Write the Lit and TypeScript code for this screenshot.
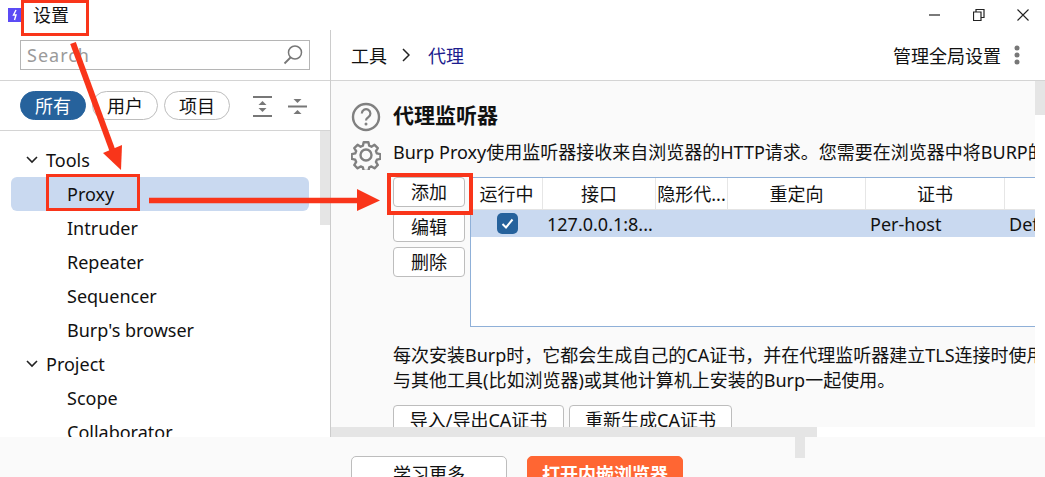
import {html, css, LitElement} from 'lit';
import {customElement} from 'lit/decorators.js';

const chevron = html`<svg class="chev" width="12" height="8" viewBox="0 0 12 8"><path d="M1 1l5 5 5-5" fill="none" stroke="#222" stroke-width="1.6"/></svg>`;

@customElement('app-root')
export class AppRoot extends LitElement {
  static styles = css`
    :host {
      display: block;
      position: relative;
      width: 1045px;
      height: 477px;
      overflow: hidden;
      background: #fff;
      color: #111;
      font-family: "Noto Sans", "Noto Sans CJK SC", sans-serif;
      font-size: 18px;
    }
    .titlebar {
      height: 30px;
      display: flex;
      align-items: center;
      justify-content: space-between;
      padding: 0 16px 0 8px;
    }
    .win {
      display: flex;
      gap: 32px;
      align-items: center;
    }
    .body {
      display: flex;
      height: 407px;
    }
    .side {
      width: 330px;
      border-right: 1px solid #ccc;
      flex: none;
      display: flex;
      flex-direction: column;
    }
    .search-row {
      padding: 10px 20px 0;
      box-sizing: border-box;
      border-bottom: 1px solid #d4d4d4;
      height: 51px;
    }
    .search {
      width: 290px;
      height: 30px;
      box-sizing: border-box;
      border: 1px solid #b5b5b5;
      display: flex;
      align-items: center;
      justify-content: space-between;
      padding: 0 6px;
      color: #9a9a9a;
      font-size: 18px;
      letter-spacing: 1px;
    }
    .filters {
      height: 50px;
      box-sizing: border-box;
      padding: 10px 0 0 20px;
      border-bottom: 1px solid #d4d4d4;
      display: flex;
      align-items: flex-start;
      gap: 6px;
    }
    .pill {
      width: 66px;
      height: 29px;
      box-sizing: border-box;
      border: 1px solid #bdbdbd;
      border-radius: 15px;
      display: flex;
      align-items: center;
      justify-content: center;
      line-height: 1;
    }
    .pill.on {
      background: #26629c;
      border-color: #26629c;
      color: #fff;
    }
    .fold {
      display: flex;
      gap: 16px;
      margin-left: 17px;
      margin-top: 5px;
    }
    .tree-wrap {
      flex: 1;
      display: flex;
      overflow: hidden;
    }
    .tree {
      flex: 1;
      padding: 12px 11px 0 11px;
    }
    .row {
      height: 34px;
      display: flex;
      align-items: center;
      padding-left: 56px;
      border-radius: 6px;
    }
    .row.group {
      padding-left: 15px;
    }
    .row.sel {
      background: #c9d9f0;
    }
    .chev {
      margin-right: 8px;
    }
    .thumb-v {
      width: 10px;
      height: 94px;
      background: #e5e5e5;
      flex: none;
    }
    .main {
      flex: 1;
      display: flex;
      flex-direction: column;
      min-width: 0;
    }
    .crumbs {
      box-sizing: border-box;
      border-bottom: 1px solid #d4d4d4;
      height: 51px;
      display: flex;
      align-items: center;
      padding: 0 25px 0 20px;
    }
    .crumbs .cur {
      color: #1c1c8e;
    }
    .crumbs .sep {
      margin: 0 18px 0 15px;
    }
    .crumbs .global {
      margin-left: auto;
    }
    .kebab {
      margin-left: 13px;
    }
    .scroll-area {
      flex: 1;
      display: flex;
      min-height: 0;
    }
    .content {
      width: 704px;
      flex: none;
      box-sizing: border-box;
      overflow: hidden;
      background: #fafafa;
      padding: 21px 0 0 20px;
      display: grid;
      grid-template-columns: 30px 1fr;
      column-gap: 12px;
      align-content: start;
    }
    .icons {
      display: flex;
      flex-direction: column;
      gap: 8px;
    }
    .panel {
      min-width: 0;
    }
    .nowrap {
      white-space: nowrap;
    }
    h2 {
      margin: 0 0 11px;
      font-size: 21px;
      line-height: 26px;
      font-weight: 700;
    }
    .desc {
      margin: 0;
      line-height: 26px;
    }
    .listeners {
      display: flex;
      gap: 5px;
      margin-top: 12px;
    }
    .btns {
      display: flex;
      flex-direction: column;
      gap: 5px;
      flex: none;
    }
    .btn {
      box-sizing: border-box;
      width: 72px;
      height: 30px;
      background: #fff;
      border: 1px solid #bdbdbd;
      border-radius: 4px;
      display: flex;
      align-items: center;
      justify-content: center;
      line-height: 1;
    }
    .table {
      flex: 1;
      min-width: 0;
      height: 150px;
      box-sizing: border-box;
      background: #fff;
      border: 1px solid #8fb0d8;
      border-right: none;
      overflow: hidden;
    }
    .tr {
      display: grid;
      grid-template-columns: 72px 113px 72px 138px 139px 60px;
      width: 600px;
    }
    .tr.head {
      height: 32px;
      border-bottom: 1px solid #e4e4e4;
      box-sizing: border-box;
    }
    .tr.head div {
      border-right: 1px solid #e6e6e6;
      display: flex;
      align-items: center;
      justify-content: center;
      white-space: nowrap;
      overflow: hidden;
      line-height: 1;
    }
    .tr.data {
      height: 27px;
      background: #c9d9f0;
      width: auto;
    }
    .tr.data div {
      display: flex;
      align-items: center;
      white-space: nowrap;
      padding-left: 4px;
    }
    .tr.data div.check {
      justify-content: center;
      padding-left: 0;
    }
    .cb {
      width: 21px;
      height: 21px;
      border-radius: 5px;
      background: #26629c;
      display: flex;
      align-items: center;
      justify-content: center;
    }
    .para {
      margin: 16px 0 0;
      line-height: 25px;
    }
    .para-btns {
      display: flex;
      gap: 5px;
      margin-top: 12px;
    }
    .para-btns .btn.ca-io {
      width: 171px;
    }
    .para-btns .btn.ca-new {
      width: 163px;
    }
    .gutter {
      flex: 1;
      background: #fff;
    }
    .thumb-main {
      height: 34px;
      background: #e5e5e5;
    }
    .hbar {
      height: 10px;
      flex: none;
    }
    .hbar div {
      width: 486px;
      height: 10px;
      background: #e5e5e5;
    }
    .bottom {
      height: 40px;
      background: #fafafa;
      overflow: hidden;
      position: relative;
      display: flex;
      gap: 20px;
      padding: 19px 0 0 351px;
      box-sizing: border-box;
    }
    .cta {
      box-sizing: border-box;
      width: 156px;
      height: 34px;
      border-radius: 5px;
      display: flex;
      align-items: center;
      justify-content: center;
      flex: none;
      background: #fff;
      border: 1px solid #bdbdbd;
    }
    .cta.orange {
      background: #ff6633;
      border-color: #ff6633;
      color: #fff;
      font-weight: 700;
    }
    .stub {
      position: absolute;
      left: 795px;
      top: 0;
      width: 10px;
      height: 21px;
      background: #e5e5e5;
    }
    .mark {
      position: absolute;
      box-sizing: border-box;
      border: 3px solid #f9351a;
    }
    .mark-title {
      left: 21px;
      top: 0;
      width: 68px;
      height: 36px;
      background: #fff;
      padding: 0 0 0 9px;
      line-height: 24px;
      color: #111;
    }
    .mark-proxy {
      left: 46px;
      top: 174px;
      width: 94px;
      height: 37px;
    }
    .mark-add {
      left: 387px;
      top: 173px;
      width: 86px;
      height: 42px;
      border-width: 4px;
    }
    .arrows {
      position: absolute;
      left: 0;
      top: 0;
      pointer-events: none;
    }
  `;

  render() {
    return html`
      <div class="titlebar">
        <svg width="16" height="14" viewBox="0 0 16 14"><rect width="16" height="14" fill="#5b4bf5"/><path d="M8 2L5.5 7H8L6.500 12" fill="none" stroke="#fff" stroke-width="1.4"/></svg>
        <div class="win">
          <svg width="12" height="12" viewBox="0 0 12 12"><path d="M0 6h11" stroke="#222" stroke-width="1.2"/></svg>
          <svg width="12" height="12" viewBox="0 0 12 12"><path d="M.5 3h7.5v8.500H.5zM3 3V.5h8v8H8" fill="none" stroke="#222" stroke-width="1.2"/></svg>
          <svg width="12" height="12" viewBox="0 0 12 12"><path d="M.5.5l11 11M11.500.5l-11 11" stroke="#222" stroke-width="1.1"/></svg>
        </div>
      </div>
      <div class="body">
        <div class="side">
          <div class="search-row">
            <div class="search">
              <span>Search</span>
              <svg width="20" height="20" viewBox="0 0 20 20"><circle cx="12" cy="7.500" r="6.500" fill="none" stroke="#777" stroke-width="1.5"/><path d="M7.500 12.500L1.500 18.500" stroke="#777" stroke-width="1.800"/></svg>
            </div>
          </div>
          <div class="filters">
            <div class="pill on">所有</div>
            <div class="pill">用户</div>
            <div class="pill">项目</div>
            <div class="fold">
              <svg width="19" height="21" viewBox="0 0 19 21"><path d="M0 1h19M0 20h19" stroke="#777" stroke-width="2"/><path d="M9.500 5l4 4h-8zM9.500 16l4-4h-8z" fill="#777"/></svg>
              <svg width="19" height="21" viewBox="0 0 19 21"><path d="M0 10.500h19" stroke="#777" stroke-width="2"/><path d="M9.500 7l-4-4h8zM9.500 14l-4 4h8z" fill="#777"/></svg>
            </div>
          </div>
          <div class="tree-wrap">
            <div class="tree">
              <div class="row group">${chevron}Tools</div>
              <div class="row sel">Proxy</div>
              <div class="row">Intruder</div>
              <div class="row">Repeater</div>
              <div class="row">Sequencer</div>
              <div class="row">Burp's browser</div>
              <div class="row group">${chevron}Project</div>
              <div class="row">Scope</div>
              <div class="row">Collaborator</div>
            </div>
            <div class="thumb-v"></div>
          </div>
        </div>
        <div class="main">
          <div class="crumbs">
            <span>工具</span>
            <svg class="sep" width="8" height="14" viewBox="0 0 8 14"><path d="M1 1l6 6-6 6" fill="none" stroke="#222" stroke-width="1.5"/></svg>
            <span class="cur">代理</span>
            <span class="global">管理全局设置</span>
            <svg class="kebab" width="6" height="20" viewBox="0 0 6 20"><circle cx="3" cy="3" r="2.500" fill="#777"/><circle cx="3" cy="10" r="2.500" fill="#777"/><circle cx="3" cy="17" r="2.500" fill="#777"/></svg>
          </div>
          <div class="scroll-area">
            <div class="content">
              <div class="icons">
                <svg width="30" height="30" viewBox="0 0 30 30"><circle cx="15" cy="15" r="13" fill="none" stroke="#808080" stroke-width="2.400"/><path d="M10.800 11.500a4.300 4.300 0 1 1 6.500 3.700c-1.500.9-2.300 1.700-2.300 3.300" fill="none" stroke="#808080" stroke-width="2.200"/><circle cx="15" cy="22" r="1.500" fill="#808080"/></svg>
                <svg width="30" height="30" viewBox="0 0 30 30"><circle cx="15" cy="15" r="5.500" fill="none" stroke="#808080" stroke-width="2.400"/><path d="M12.500 1.500h5l.8 3.700 2.400 1 3.200-2 3.500 3.500-2 3.200 1 2.400 3.700.8v5l-3.700.8-1 2.400 2 3.200-3.500 3.500-3.200-2-2.400 1-.8 3.700h-5l-.8-3.700-2.400-1-3.200 2-3.500-3.500 2-3.200-1-2.400-3.700-.8v-5l3.700-.8 1-2.400-2-3.200 3.500-3.500 3.200 2 2.400-1z" fill="none" stroke="#808080" stroke-width="2.500" stroke-linejoin="round" transform="translate(.8 .8) scale(.95)"/></svg>
              </div>
              <div class="panel">
                <h2>代理监听器</h2>
                <p class="desc nowrap">Burp Proxy使用监听器接收来自浏览器的HTTP请求。您需要在浏览器中将BURP的</p>
                <div class="listeners">
                  <div class="btns">
                    <div class="btn">添加</div>
                    <div class="btn">编辑</div>
                    <div class="btn">删除</div>
                  </div>
                  <div class="table">
                    <div class="tr head">
                      <div>运行中</div><div>接口</div><div>隐形代...</div><div>重定向</div><div>证书</div><div></div>
                    </div>
                    <div class="tr data">
                      <div class="check"><span class="cb"><svg width="13" height="11" viewBox="0 0 13 11"><path d="M1.500 6l3.500 3.500 6.500-8" fill="none" stroke="#fff" stroke-width="2"/></svg></span></div>
                      <div>127.0.0.1:8...</div><div></div><div></div><div>Per-host</div><div>Def</div>
                    </div>
                  </div>
                </div>
                <p class="para nowrap">每次安装Burp时，它都会生成自己的CA证书，并在代理监听器建立TLS连接时使用<br>与其他工具(比如浏览器)或其他计算机上安装的Burp一起使用。</p>
                <div class="para-btns">
                  <div class="btn ca-io">导入/导出CA证书</div>
                  <div class="btn ca-new">重新生成CA证书</div>
                </div>
              </div>
            </div>
            <div class="gutter"><div class="thumb-main"></div></div>
          </div>
          <div class="hbar"><div></div></div>
        </div>
      </div>
      <div class="bottom">
        <div class="cta">学习更多</div>
        <div class="cta orange">打开内嵌浏览器</div>
        <div class="stub"></div>
      </div>

      <div class="mark mark-title">设置</div>
      <div class="mark mark-proxy"></div>
      <div class="mark mark-add"></div>
      <svg class="arrows" width="1045" height="477" viewBox="0 0 1045 477">
        <path d="M73 43L113 152" stroke="#f9351a" stroke-width="6"/>
        <path d="M103 153L122 145L121 170z" fill="#f9351a"/>
        <path d="M149 200.500H358" stroke="#f9351a" stroke-width="5.500"/>
        <path d="M357 189L380 200.500L357 211z" fill="#f9351a"/>
      </svg>
    `;
  }
}
